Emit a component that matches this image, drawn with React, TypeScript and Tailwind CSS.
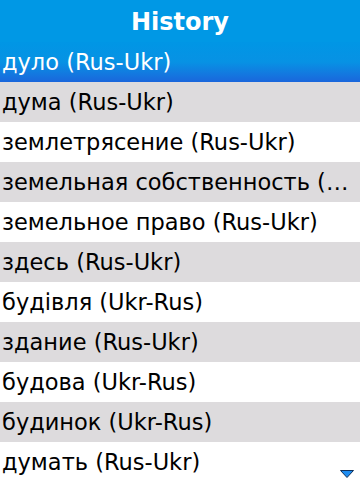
const ITEMS = [
  "дуло (Rus-Ukr)",
  "дума (Rus-Ukr)",
  "землетрясение (Rus-Ukr)",
  "земельная собственность (Rus-Ukr)",
  "земельное право (Rus-Ukr)",
  "здесь (Rus-Ukr)",
  "будівля (Ukr-Rus)",
  "здание (Rus-Ukr)",
  "будова (Ukr-Rus)",
  "будинок (Ukr-Rus)",
  "думать (Rus-Ukr)",
];

export default function App() {
  return (
    <div className="relative w-[360px] h-[480px] overflow-hidden bg-white font-['DejaVu_Sans',sans-serif]">
      <div className="h-[42px] flex items-center justify-center pt-[1px] bg-[#0098e5] text-white font-bold text-[24px] leading-none">
        History
      </div>
      <div className="flex flex-col">
        {ITEMS.map((item, i) => (
          <div
            key={item}
            className={
              i === 0
                ? "h-10 flex items-center pl-[2px] pr-[4px] text-[22.5px] text-white bg-gradient-to-b from-[#0096e5] via-[#0792e4] to-[#1a66dc]"
                : i % 2 === 1
                ? "h-10 flex items-center pl-[2px] pr-[4px] text-[22.5px] text-black bg-[#dddbdd]"
                : "h-10 flex items-center pl-[2px] pr-[4px] text-[22.5px] text-black bg-white"
            }
          >
            <span className="truncate leading-[30px]">{item}</span>
          </div>
        ))}
      </div>
      {/* scroll-down hint */}
      <svg className="absolute right-[6px] bottom-[2px]" width="14" height="8" viewBox="0 0 14 8">
        <polygon points="0.5,0.5 13.5,0.5 7,7.5" fill="#1d8cf0" stroke="#10305a" strokeWidth="1" />
      </svg>
    </div>
  );
}
